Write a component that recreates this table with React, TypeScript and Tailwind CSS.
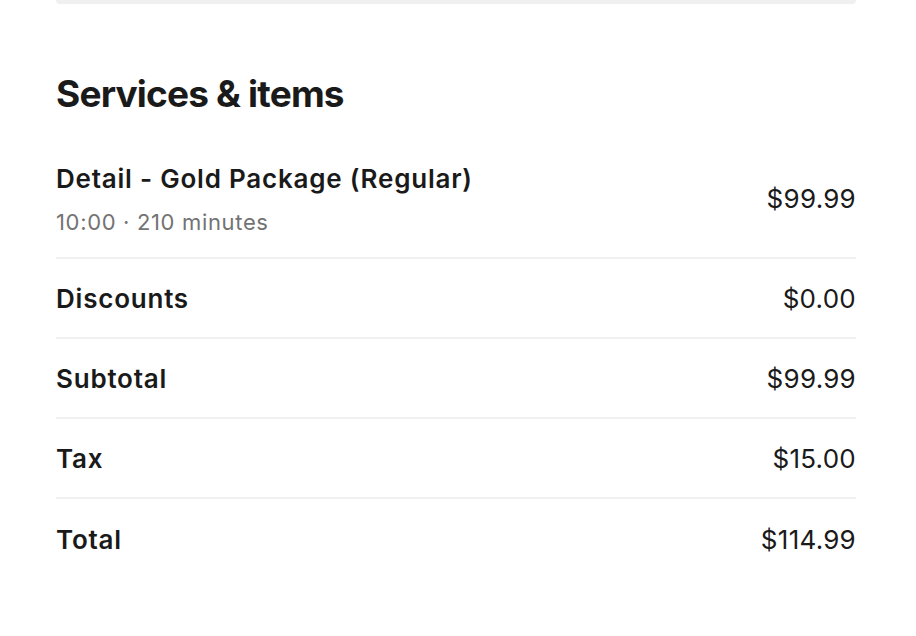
const rows = [
  { label: 'Discounts', amount: '$0.00' },
  { label: 'Subtotal', amount: '$99.99' },
  { label: 'Tax', amount: '$15.00' },
  { label: 'Total', amount: '$114.99', last: true },
]

export default function App() {
  return (
    <div className="min-h-[636px] bg-white text-[#1a1a1a] [font-family:Inter,'Noto_Sans',sans-serif]">
      <div className="ml-14 w-[800px]">
        <div className="h-1 rounded-b-md bg-[#f0f0f0]" />

        <h2 className="mt-[68px] text-[37px] font-bold leading-[44px] tracking-[-0.022em]">
          Services &amp; items
        </h2>

        <div className="mt-[46px] flex items-center justify-between border-b-2 border-[#f0f0f0] pb-[21px]">
          <div>
            <p className="text-[26px] font-semibold leading-[34px] tracking-[0.03em]">
              Detail - Gold Package (Regular)
            </p>
            <p className="mt-[12px] text-[22px] leading-[28px] tracking-[0.03em] text-[#737373]">
              10:00 · 210 minutes
            </p>
          </div>
          <span className="text-[26px] leading-[34px] tracking-[0.01em]">$99.99</span>
        </div>

        {rows.map((row) => (
          <div
            key={row.label}
            className={
              'flex h-[80px] items-center justify-between' +
              (row.last ? '' : ' border-b-2 border-[#f0f0f0]')
            }
          >
            <span className="text-[26px] font-semibold tracking-[0.03em]">{row.label}</span>
            <span className="text-[26px] tracking-[0.01em]">{row.amount}</span>
          </div>
        ))}
      </div>
    </div>
  )
}
